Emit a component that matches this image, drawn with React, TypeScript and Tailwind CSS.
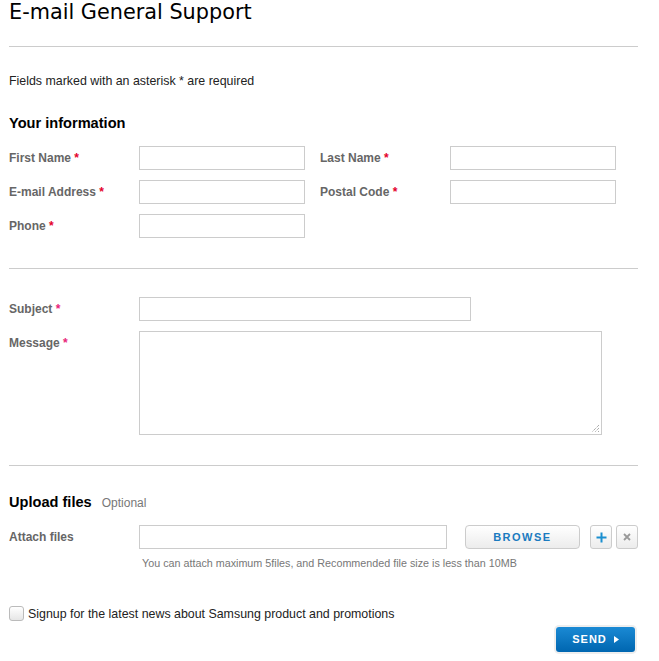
import React from "react";

const Req = ({ pink }: { pink?: boolean }) => (
  <span className={pink ? "text-[#e8257a]" : "text-[#e4002b]"}> *</span>
);

const Label = ({ children }: { children: React.ReactNode }) => (
  <div className="w-[130px] shrink-0 text-[12px] font-bold text-[#666] leading-[24px]">{children}</div>
);

const Input = ({ w }: { w: string }) => (
  <div className={`${w} h-[24px] border border-[#ccc] bg-white`} />
);

export default function App() {
  return (
    <div className="w-[659px] min-h-[661px] bg-white" style={{ fontFamily: '"Liberation Sans", Arial, sans-serif' }}>
      <div className="ml-[9px] w-[629px]">
        <h1 className="text-[20.8px] leading-[24px] text-black h-[46px]" style={{ fontFamily: '"DejaVu Sans", sans-serif' }}>E-mail General Support</h1>
        <div className="h-px bg-[#ccc]" />
        <p className="mt-[27px] text-[12.4px] leading-[14px] text-[#222]">Fields marked with an asterisk * are required</p>
        <h2 className="mt-[27px] text-[14.6px] leading-[17px] font-bold text-black">Your information</h2>
        <div className="mt-[14px] flex flex-col gap-[10px]">
          <div className="flex items-center">
            <Label>First Name<Req /></Label>
            <Input w="w-[166px]" />
            <div className="w-[15px]" />
            <Label>Last Name<Req /></Label>
            <Input w="w-[166px]" />
          </div>
          <div className="flex items-center">
            <Label>E-mail Address<Req /></Label>
            <Input w="w-[166px]" />
            <div className="w-[15px]" />
            <Label>Postal Code<Req /></Label>
            <Input w="w-[166px]" />
          </div>
          <div className="flex items-center">
            <Label>Phone<Req /></Label>
            <Input w="w-[166px]" />
          </div>
        </div>
        <div className="mt-[30px] h-px bg-[#ccc]" />
        <div className="mt-[28px] flex flex-col gap-[10px]">
          <div className="flex items-center">
            <Label>Subject<Req pink /></Label>
            <Input w="w-[332px]" />
          </div>
          <div className="flex items-start">
            <Label>Message<Req pink /></Label>
            <div className="relative w-[463px] h-[104px] border border-[#ccc] bg-white">
              <svg className="absolute right-[1px] bottom-[1px]" width="9" height="9" viewBox="0 0 9 9">
                <path d="M8 1 L1 8 M8 4 L4 8 M8 7 L7 8" stroke="#888" strokeWidth="1" strokeDasharray="1 1" />
              </svg>
            </div>
          </div>
        </div>
        <div className="mt-[30px] h-px bg-[#ccc]" />
        <div className="mt-[28px] flex items-baseline">
          <h2 className="text-[14.6px] leading-[17px] font-bold text-black">Upload files</h2>
          <span className="ml-[10px] text-[12px] text-[#777]">Optional</span>
        </div>
        <div className="mt-[13px] flex items-center">
          <Label>Attach files</Label>
          <Input w="w-[309px]" />
          <button className="ml-[18px] w-[116px] h-[24px] rounded-[4px] border border-[#ccc] bg-gradient-to-b from-white to-[#ececec] text-[11px] font-bold tracking-[1.5px] text-[#1a7bc0]">BROWSE</button>
          <button className="ml-[10px] w-[22px] h-[24px] rounded-[3px] border border-[#ccc] bg-gradient-to-b from-white to-[#ececec] flex items-center justify-center">
            <svg width="11" height="11" viewBox="0 0 11 11"><path d="M5.5 0.5v10M0.5 5.5h10" stroke="#1a8fd0" strokeWidth="2" /></svg>
          </button>
          <button className="ml-[4px] w-[22px] h-[24px] rounded-[3px] border border-[#ccc] bg-gradient-to-b from-white to-[#ececec] flex items-center justify-center">
            <svg width="8" height="8" viewBox="0 0 8 8"><path d="M1 1l6 6M7 1l-6 6" stroke="#999" strokeWidth="1.8" /></svg>
          </button>
        </div>
        <p className="mt-[8px] ml-[133px] text-[10.75px] leading-[13px] text-[#777]">You can attach maximum 5files, and Recommended file size is less than 10MB</p>
        <div className="mt-[36px] flex items-center">
          <div className="w-[15px] h-[15px] rounded-[3px] border border-[#bbb] bg-gradient-to-b from-white to-[#e6e6e6]" />
          <span className="ml-[4px] text-[12.4px] leading-[14px] text-[#222]">Signup for the latest news about Samsung product and promotions</span>
        </div>
        <div className="mt-[6px] flex justify-end pr-[3px]">
          <button className="w-[79px] h-[25px] rounded-[3px] bg-gradient-to-b from-[#1a8ad4] to-[#0066b0] text-white text-[11px] font-bold tracking-[1px] flex items-center justify-center gap-[7px] shadow-[0_0_0_2px_#eee]">
            SEND
            <svg width="5" height="7" viewBox="0 0 5 7"><path d="M0 0L5 3.5L0 7Z" fill="white" /></svg>
          </button>
        </div>
      </div>
    </div>
  );
}
